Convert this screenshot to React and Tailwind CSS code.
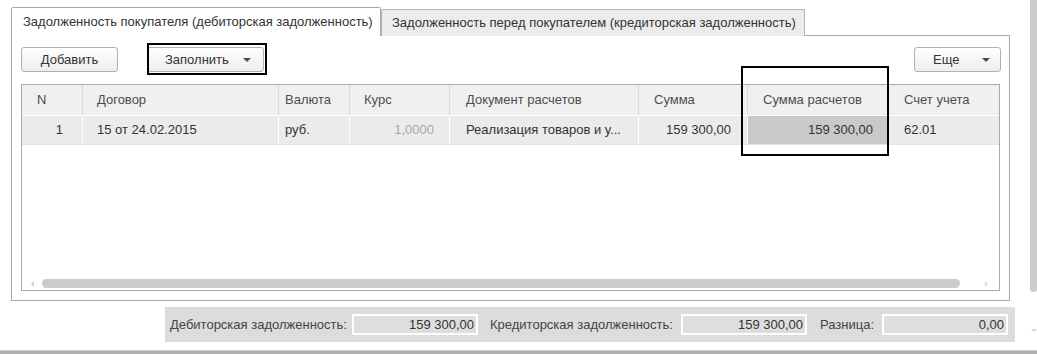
import React from 'react';

const COLS = [
  { id: 'n', label: 'N', pad: 'pl-[15px]' },
  { id: 'dog', label: 'Договор', pad: 'pl-[14px]' },
  { id: 'val', label: 'Валюта', pad: 'pl-[6px]' },
  { id: 'kurs', label: 'Курс', pad: 'pl-[14px]' },
  { id: 'doc', label: 'Документ расчетов', pad: 'pl-[16px]' },
  { id: 'sum', label: 'Сумма', pad: 'pl-[15px]' },
  { id: 'sumr', label: 'Сумма расчетов', pad: 'pl-[15px]' },
  { id: 'schet', label: 'Счет учета', pad: 'pl-[15px]' },
];

function Arrow() {
  return (
    <span className="inline-block h-0 w-0 border-x-[4px] border-t-[4px] border-x-transparent border-t-[#4a4a4a]" />
  );
}

function Button({ children, className = '' }) {
  return (
    <div
      className={`flex h-[25px] items-center rounded-[3px] border border-[#b1b1b1] bg-gradient-to-b from-white to-[#ededed] text-[#333] ${className}`}
    >
      {children}
    </div>
  );
}

function Field({ value }) {
  return (
    <div className="flex h-[21px] w-[126px] items-center justify-end border-2 border-white bg-[#dedede] pr-[2px] text-[#333]">
      {value}
    </div>
  );
}

export default function App() {
  return (
    <div className="relative flex h-[354px] w-[1037px] flex-col overflow-hidden bg-white font-['Liberation_Sans',Arial,sans-serif] text-[13px] text-[#333]">
      <div className="flex min-h-0 flex-1">
        <div className="w-[1030px] pl-[11px] pt-[7px]">
          {/* tabs */}
          <div className="-mb-px flex h-[29px] items-end">
            <div className="relative z-10 flex h-[29px] w-[370px] items-center rounded-t-[2px] border-x border-t border-[#a9a9a9] bg-white pl-[11px]">
              Задолженность покупателя (дебиторская задолженность)
            </div>
            <div className="flex h-[27px] w-[424px] items-center rounded-t-[2px] border-x border-t border-[#b4b4b4] bg-[#ececec] pl-[10px] pb-[1px]">
              Задолженность перед покупателем (кредиторская задолженность)
            </div>
          </div>

          {/* panel */}
          <div className="h-[266px] w-[999px] border border-[#a9a9a9] bg-white px-[9px] pt-[11px]">
            <div className="flex h-[25px] items-center">
              <Button className="w-[97px] justify-center">Добавить</Button>
              <Button className="ml-[29px] w-[117px] pl-[17px] pr-[12px] justify-between">
                <span>Заполнить</span>
                <Arrow />
              </Button>
              <Button className="ml-auto mr-[-1px] w-[87px] pl-[18px] pr-[10px] justify-between">
                <span>Еще</span>
                <Arrow />
              </Button>
            </div>

            {/* table */}
            <div className="mt-[12px] flex h-[207px] w-[979px] flex-col border border-[#a9a9a9]">
              <div className="grid h-[31px] grid-cols-[60px_196px_71px_100px_189px_109px_141px_111px] border-b border-white bg-[#f0f0f0] text-[#4d4d4d]">
                {COLS.map((c, i) => (
                  <div
                    key={c.id}
                    className={`flex items-center ${c.pad} ${i === 0 ? '' : 'border-l border-[#dadada]'}`}
                  >
                    {c.label}
                  </div>
                ))}
              </div>
              <div className="grid h-[29px] grid-cols-[60px_196px_71px_100px_189px_109px_141px_111px] border-b border-[#e3e3e3] bg-[#ebebeb]">
                <div className="flex items-center justify-end pr-[19px]">1</div>
                <div className="flex items-center border-l border-white pl-[14px]">15 от 24.02.2015</div>
                <div className="flex items-center border-l border-white pl-[6px]">руб.</div>
                <div className="flex items-center justify-end border-l border-white pr-[15px] text-[#a8a8a8]">1,0000</div>
                <div className="flex items-center border-l border-white pl-[16px]">Реализация товаров и у...</div>
                <div className="flex items-center justify-end border-l border-white pr-[16px]">159 300,00</div>
                <div className="flex items-center justify-end border-l border-white bg-[#c9c9c9] pr-[15px]">159 300,00</div>
                <div className="flex items-center border-l border-white pl-[15px]">62.01</div>
              </div>
              <div className="flex-1" />
              {/* horizontal scrollbar */}
              <div className="mb-[2px] flex h-[9px] items-center">
                <span className="ml-[9px] inline-block h-0 w-0 border-y-[3px] border-r-[3px] border-y-transparent border-r-[#cfcfcf]" />
                <div className="ml-[8px] h-[9px] w-[918px] rounded-full bg-[#cbcbcb]" />
                <span className="ml-[25px] inline-block h-0 w-0 border-y-[3px] border-l-[3px] border-y-transparent border-l-[#dcdcdc]" />
              </div>
            </div>
          </div>

          {/* totals */}
          <div className="ml-[154px] mt-[6px] flex h-[35px] w-[850px] items-center bg-[#dcdcdc] pl-[5px] text-[#444]">
            <span className="w-[182px]">Дебиторская задолженность:</span>
            <Field value="159 300,00" />
            <span className="ml-[12px] w-[191px]">Кредиторская задолженность:</span>
            <Field value="159 300,00" />
            <span className="ml-[13px] w-[62px]">Разница:</span>
            <Field value="0,00" />
          </div>
        </div>

        {/* vertical scrollbar */}
        <div className="flex w-[7px] flex-col items-center">
          <div className="h-[292px] w-[7px] rounded-b-[3px] bg-[#cdcdcd]" />
          <span className="mt-[37px] inline-block h-0 w-0 border-x-[3px] border-t-[3px] border-x-transparent border-t-[#d6d6d6]" />
        </div>
      </div>

      {/* bottom edge */}
      <div className="h-[4px] border-t border-[#cfcfcf] bg-[#b0b0b0]" />

      {/* annotation frames */}
      <div className="absolute left-[147px] top-[43px] h-[32px] w-[120px] border-2 border-black" />
      <div className="absolute left-[741px] top-[66px] h-[90px] w-[148px] border-2 border-black" />
    </div>
  );
}
